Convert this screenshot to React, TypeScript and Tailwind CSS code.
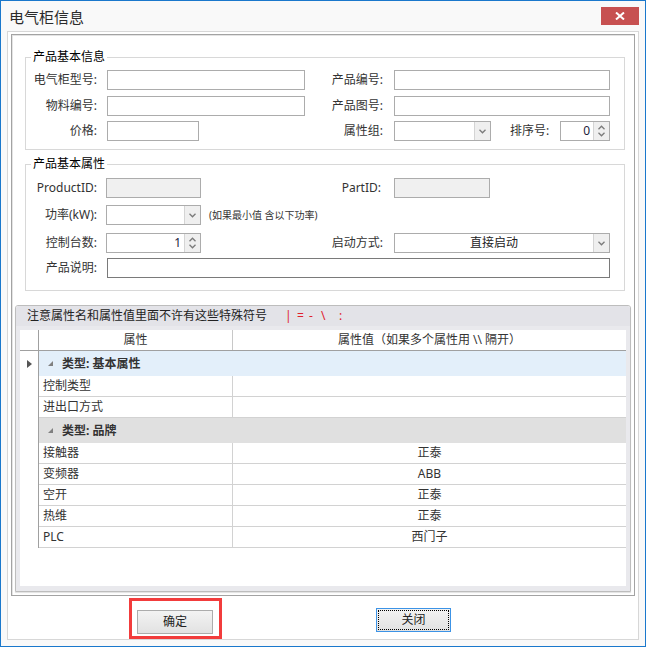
import type { ReactNode } from 'react'

function ChevronDown() {
  return (
    <svg width="7" height="5" viewBox="0 0 7 5">
      <path d="M0.5 0.8L3.5 3.8L6.5 0.8" fill="none" stroke="#7a7a7a" strokeWidth="1.3" />
    </svg>
  )
}

function ChevronUp() {
  return (
    <svg width="7" height="5" viewBox="0 0 7 5">
      <path d="M0.5 4.2L3.5 1.2L6.5 4.2" fill="none" stroke="#7a7a7a" strokeWidth="1.3" />
    </svg>
  )
}

function Box({ className = '' }: { className?: string }) {
  return <div className={`h-[20px] shrink-0 border ${className}`} />
}

function Combo({ className = '', text }: { className?: string; text?: string }) {
  return (
    <div className={`flex h-[20px] shrink-0 border border-[#acacac] bg-white ${className}`}>
      <div className="flex flex-1 items-center justify-center text-[12px] leading-[18px] text-[#222]">{text}</div>
      <div className="flex w-[16px] items-center justify-center border-l border-[#d4d4d4] bg-[#efefef]">
        <ChevronDown />
      </div>
    </div>
  )
}

function Spinner({ className = '', value }: { className?: string; value: string }) {
  return (
    <div className={`flex h-[20px] shrink-0 border border-[#acacac] bg-white ${className}`}>
      <div className="flex-1 pr-[3px] text-right text-[12px] leading-[18px] text-[#1c1c3c]">{value}</div>
      <div className="flex w-[16px] flex-col items-center justify-center gap-[2px] border-l border-[#d4d4d4] bg-[#efefef]">
        <ChevronUp />
        <ChevronDown />
      </div>
    </div>
  )
}

function Label({ className = '', children }: { className?: string; children: ReactNode }) {
  return <span className={`shrink-0 text-right text-[12px] leading-[20px] text-[#333]`}><span className={`block ${className}`}>{children}</span></span>
}

function Group({ title, className = '', children }: { title: string; className?: string; children: ReactNode }) {
  return (
    <fieldset className={`ml-[13px] w-[600px] border border-[#d8d8d8] ${className}`}>
      <legend className="ml-[5px] px-[2px] text-[12px] leading-[16px] text-black">{title}</legend>
      {children}
    </fieldset>
  )
}

function CategoryRow({ title, current, bg }: { title: string; current?: boolean; bg: string }) {
  return (
    <div className="flex h-[25px]">
      <div className="flex w-[19px] items-center border-r border-[#a0a0a0] pl-[7px]">
        {current && (
          <svg width="5" height="8" viewBox="0 0 5 8">
            <polygon points="0,0 5,4 0,8" fill="#555" />
          </svg>
        )}
      </div>
      <div className={`flex flex-1 items-center pl-[9px] ${bg}`}>
        <svg width="5" height="5" viewBox="0 0 5 5">
          <polygon points="5,0 5,5 0,5" fill="#808080" />
        </svg>
        <span className="ml-[9px] text-[12px] font-bold text-[#333]">{title}</span>
      </div>
    </div>
  )
}

function DataRow({ name, value }: { name: string; value?: string }) {
  return (
    <div className="flex h-[21px] text-[12px] text-[#333]">
      <div className="w-[19px] border-r border-[#a0a0a0]" />
      <div className="w-[194px] border-r border-b border-[#d2d2d2] pl-[4px] leading-[20px]">{name}</div>
      <div className="flex-1 border-b border-[#d2d2d2] text-center leading-[20px]">{value}</div>
    </div>
  )
}

const brandRows = [
  ['接触器', '正泰'],
  ['变频器', 'ABB'],
  ['空开', '正泰'],
  ['热维', '正泰'],
  ['PLC', '西门子'],
]

export default function App() {
  return (
    <div className="flex h-[647px] w-[646px] flex-col border border-[#1a78cc] bg-[#f9f9f9] font-['Noto_Sans','Noto_Sans_CJK_SC',sans-serif]">
      {/* title bar */}
      <div className="flex h-[30px] items-start justify-between pl-[8px] pr-[6px]">
        <div className="mt-[6px] text-[15px] leading-[20px] text-[#2b2b2b]">电气柜信息</div>
        <button type="button" className="mt-[6px] flex h-[18px] w-[38px] items-center justify-center bg-[#c75050]">
          <svg width="10" height="8" viewBox="0 0 10 8">
            <path d="M1 0.5L9 7.5M9 0.5L1 7.5" stroke="#fff" strokeWidth="2" />
          </svg>
        </button>
      </div>

      <div className="ml-[6px] flex h-[609px] w-[632px] flex-col border border-[#d7d7d7] bg-white">
        <div className="ml-[3px] mt-[2px] flex h-[562px] w-[624px] flex-col border border-[#a3a3a3] shadow-[inset_1px_1px_0_#e4e4e4]">
          {/* 产品基本信息 */}
          <Group title="产品基本信息" className="mt-[14px] pb-[8px]">
            <div className="mt-[5px] flex h-[20px] items-center">
              <div className="flex w-[279px] items-center">
                <Label className="w-[71px]">电气柜型号:</Label>
                <Box className="ml-[10px] w-[198px] border-[#acacac] bg-white" />
              </div>
              <Label className="w-[78px]">产品编号:</Label>
              <Box className="ml-[11px] w-[216px] border-[#acacac] bg-white" />
            </div>
            <div className="mt-[6px] flex h-[20px] items-center">
              <div className="flex w-[279px] items-center">
                <Label className="w-[71px]">物料编号:</Label>
                <Box className="ml-[10px] w-[198px] border-[#acacac] bg-white" />
              </div>
              <Label className="w-[78px]">产品图号:</Label>
              <Box className="ml-[11px] w-[216px] border-[#acacac] bg-white" />
            </div>
            <div className="mt-[5px] flex h-[20px] items-center">
              <div className="flex w-[279px] items-center">
                <Label className="w-[71px]">价格:</Label>
                <Box className="ml-[10px] w-[92px] border-[#acacac] bg-white" />
              </div>
              <Label className="w-[78px]">属性组:</Label>
              <Combo className="ml-[11px] w-[97px]" />
              <span className="ml-[19px] w-[40px] text-[12px] leading-[20px] text-[#333]">排序号:</span>
              <Spinner className="ml-[10px] w-[50px]" value="0" />
            </div>
          </Group>

          {/* 产品基本属性 */}
          <Group title="产品基本属性" className="mt-[6px] pb-[12px]">
            <div className="mt-[6px] flex h-[20px] items-center">
              <div className="flex w-[279px] items-center">
                <Label className="w-[71px]">ProductID:</Label>
                <Box className="ml-[9px] w-[95px] border-[#acacac] bg-[#f0f0f0]" />
              </div>
              <Label className="w-[76px]">PartID:</Label>
              <Box className="ml-[13px] w-[96px] border-[#acacac] bg-[#f0f0f0]" />
            </div>
            <div className="mt-[7px] flex h-[20px] items-center">
              <Label className="w-[71px]">功率(kW):</Label>
              <Combo className="ml-[9px] w-[95px]" />
              <span className="ml-[8px] text-[10px] leading-[20px] text-[#333]">(如果最小值 含以下功率)</span>
            </div>
            <div className="mt-[8px] flex h-[20px] items-center">
              <div className="flex w-[279px] items-center">
                <Label className="w-[71px]">控制台数:</Label>
                <Spinner className="ml-[9px] w-[95px]" value="1" />
              </div>
              <Label className="w-[78px]">启动方式:</Label>
              <Combo className="ml-[11px] w-[216px]" text="直接启动" />
            </div>
            <div className="mt-[5px] flex h-[20px] items-center">
              <Label className="w-[71px]">产品说明:</Label>
              <Box className="ml-[10px] w-[503px] border-[#7a7a7a] bg-white" />
            </div>
          </Group>

          {/* 属性表 */}
          <div className="ml-[3px] mt-[14px] flex h-[287px] w-[616px] flex-col rounded-t-[3px] border border-[#bdbdbd] shadow-[0_1px_1px_rgba(0,0,0,0.12)]">
            <div className="flex h-[20px] items-center rounded-t-[2px] bg-[#e3e3e8] pl-[11px] text-[12px] leading-[20px]">
              <span className="w-[258px] text-[#222]">注意属性名和属性值里面不许有这些特殊符号</span>
              <span className="w-[12px] text-[#e0202c]">|</span>
              <span className="w-[12px] text-[#e0202c]">=</span>
              <span className="w-[12px] text-[#e0202c]">-</span>
              <span className="w-[18px] text-[#e0202c]">{'\\'}</span>
              <span className="text-[#e0202c]">:</span>
            </div>
            <div className="flex-1 bg-[#e9e9ed] px-[4px] pb-[5px] pt-[4px]">
              <div className="flex h-[256px] flex-col bg-white">
                <div className="flex h-[21px] border-b border-[#a0a0a0] text-[12px] leading-[20px] text-[#333]">
                  <div className="w-[19px] border-r border-[#a0a0a0]" />
                  <div className="w-[194px] border-r border-[#c8c8c8] text-center">属性</div>
                  <div className="flex-1 text-center">属性值（如果多个属性用 \\ 隔开）</div>
                </div>
                <CategoryRow title="类型: 基本属性" current bg="bg-[#e3effa]" />
                <DataRow name="控制类型" />
                <DataRow name="进出口方式" />
                <CategoryRow title="类型: 品牌" bg="bg-[#e0e0e0]" />
                {brandRows.map(([name, value]) => (
                  <DataRow key={name} name={name} value={value} />
                ))}
              </div>
            </div>
          </div>
        </div>

        {/* buttons */}
        <div className="flex items-start">
          <div className="ml-[121px] mt-[2px] h-[41px] w-[93px] border-[3px] border-[#f23c3c] pl-[5px] pt-[7px]">
            <button
              type="button"
              className="h-[24px] w-[76px] border border-[#acacac] bg-linear-to-b from-[#f3f3f3] to-[#e2e2e2] text-[12px] text-[#222]"
            >
              确定
            </button>
          </div>
          <button
            type="button"
            className="ml-[154px] mt-[12px] h-[24px] w-[75px] border border-[#3c93e6] bg-linear-to-b from-[#f3f3f3] to-[#e2e2e2] text-[12px] text-[#222] outline-1 outline-offset-[-3px] outline-dotted outline-black"
          >
            关闭
          </button>
        </div>
      </div>
    </div>
  )
}
